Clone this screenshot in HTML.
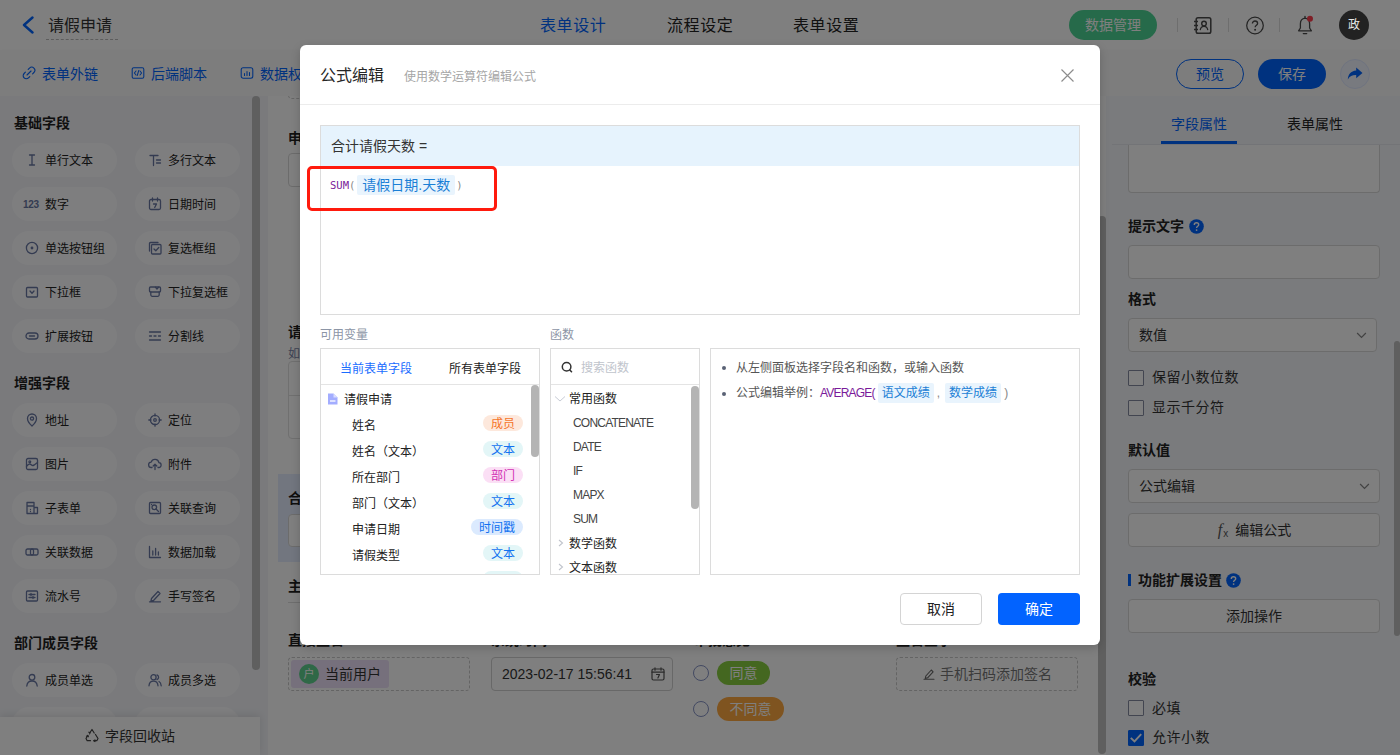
<!DOCTYPE html>
<html lang="zh-CN">
<head>
<meta charset="utf-8">
<title>公式编辑</title>
<style>
*{box-sizing:border-box;margin:0;padding:0}
html,body{width:1400px;height:755px;overflow:hidden;background:#fff}
body{font-family:"Liberation Sans","Noto Sans CJK SC",sans-serif;font-size:14px;color:#333;position:relative}
.abs{position:absolute}
svg{display:block}
/* ===== header ===== */
#hdr{position:absolute;left:0;top:0;width:1400px;height:51px;background:#fff;border-bottom:1px solid #f0f0f0}
#tb{position:absolute;left:0;top:50px;width:1400px;height:46px;background:#fafafa;box-shadow:0 2px 4px rgba(0,0,0,.08)}
.t{position:absolute;white-space:nowrap;line-height:20px}
.blue{color:#0064ff}
/* ===== left ===== */
#left{position:absolute;left:0;top:96px;width:268px;height:659px;background:#f4f5f9}
.sec{position:absolute;left:14px;font-size:14px;font-weight:bold;color:#1f1f1f;line-height:20px;white-space:nowrap}
.pill{position:absolute;width:105px;height:34px;border-radius:17px;background:#fdfdff;font-size:12px;color:#222;line-height:36px;padding-left:33px;white-space:nowrap}
.pill svg{position:absolute;left:13px;top:9.500px;width:14px;height:14px}
.c1{left:12px}.c2{left:135px}
/* ===== center ===== */
#center{position:absolute;left:268px;top:96px;width:838px;height:659px;overflow:hidden;background:#f0f1f5}
#canvas{position:absolute;left:0;top:0;width:838px;height:659px;background:#fff}
/* ===== right ===== */
#right{position:absolute;left:1106px;top:96px;width:294px;height:659px;background:#f4f6fa}
.lab{position:absolute;left:22px;font-size:14px;font-weight:bold;color:#222;line-height:20px;white-space:nowrap}
.inp{position:absolute;left:22px;width:252px;height:34px;border:1px solid #d9d9d9;border-radius:4px;background:#fff;font-size:14px;line-height:32px;padding-left:10px;color:#333}
.btn{position:absolute;left:22px;width:252px;height:34px;border:1px solid #d9d9d9;border-radius:4px;background:#fff;font-size:14px;line-height:32px;text-align:center;color:#333}
.cb{position:absolute;left:22px;width:16px;height:16px;border:1px solid #858aa0;border-radius:1px;background:#fff}
.cbt{position:absolute;left:46px;letter-spacing:.5px;font-size:14px;line-height:20px;color:#333;white-space:nowrap}
/* ===== overlay/modal ===== */
#mask{position:absolute;left:0;top:0;width:1400px;height:755px;background:rgba(0,0,0,.5)}
#modal{position:absolute;left:300px;top:45px;width:800px;height:600px;background:#fff;border-radius:6px;box-shadow:0 3px 10px rgba(0,0,0,.18)}

#modal .f12{font-size:12px}
.mbox{position:absolute;border:1px solid #dcdcdc;background:#fff;overflow:hidden}
.row{position:absolute;left:0;font-size:12px;line-height:20px;color:#222;white-space:nowrap}
.tag{position:absolute;height:16px;border-radius:8px;font-size:12px;line-height:19px;text-align:center;width:40px;left:162px}
.t-cy{background:#e3f6f7;color:#1272f0}
.t-or{background:#fde8dc;color:#f5752a}
.t-pk{background:#fbdff5;color:#d232b4}
.t-bl{background:#dbeafe;color:#1272f0}
.vt{display:inline-block;height:20px;line-height:20px;padding:0 6px;border-radius:2px;background:#e9f4fd;color:#1b7fd6;vertical-align:middle}
.mono{font-family:"DejaVu Sans Mono","Liberation Mono",monospace}
</style>
</head>
<body>
<div id="hdr">
<svg class="abs" style="left:21px;top:16px" width="14" height="18" viewBox="0 0 14 18"><path d="M11.5 1.5 L3 9 L11.5 16.5" fill="none" stroke="#0064ff" stroke-width="2.4" stroke-linecap="round" stroke-linejoin="round"/></svg>
<div class="t" style="left:48px;top:15px;font-size:16px;line-height:22px;color:#333">请假申请</div>
<div class="abs" style="left:46px;top:39px;width:72px;height:0;border-top:1px dashed #bbb"></div>
<div class="t blue" style="left:540px;top:15px;font-size:16px;letter-spacing:.600px;line-height:22px">表单设计</div>
<div class="t" style="left:667px;top:15px;font-size:16px;letter-spacing:.600px;line-height:22px;color:#222">流程设定</div>
<div class="t" style="left:793px;top:15px;font-size:16px;letter-spacing:.600px;line-height:22px;color:#222">表单设置</div>
<div class="abs" style="left:1069px;top:10px;width:88px;height:30px;border-radius:15px;background:rgb(76,212,148);color:#fff;font-size:14px;line-height:30px;text-align:center">数据管理</div>
<div class="abs" style="left:1177px;top:18px;width:1px;height:14px;background:#dcdcdc"></div>
<div class="abs" style="left:1228px;top:18px;width:1px;height:14px;background:#dcdcdc"></div>
<div class="abs" style="left:1279px;top:18px;width:1px;height:14px;background:#dcdcdc"></div>
<svg class="abs" style="left:1193px;top:16px" width="20" height="19" viewBox="0 0 20 19"><rect x="3.2" y="1.8" width="14.6" height="15.4" rx="1.8" fill="none" stroke="#4a4a4a" stroke-width="1.5"/><path d="M1 5.5h4M1 9.5h4M1 13.5h4" stroke="#4a4a4a" stroke-width="1.4" fill="none"/><circle cx="11" cy="7.6" r="2.3" fill="none" stroke="#4a4a4a" stroke-width="1.4"/><path d="M7.2 14.2c.4-2.6 2-3.8 3.8-3.8s3.4 1.200 3.800 3.800" fill="none" stroke="#4a4a4a" stroke-width="1.250"/></svg>
<svg class="abs" style="left:1245px;top:16px" width="20" height="20" viewBox="0 0 20 20"><circle cx="10" cy="9.5" r="8.300" fill="none" stroke="#4a4a4a" stroke-width="1.250"/><path d="M7.400 7.600c0-1.600 1.200-2.600 2.600-2.600s2.600 1 2.600 2.400c0 1.700-2.500 1.900-2.500 3.900" fill="none" stroke="#4a4a4a" stroke-width="1.300"/><circle cx="10.100" cy="13.800" r="1" fill="#4a4a4a"/></svg>
<svg class="abs" style="left:1296px;top:15px" width="20" height="21" viewBox="0 0 20 21"><path d="M9 3.200c-3 .4-4.600 2.700-4.600 5.500v4.300l-1.800 2.800h12.800l-1.800-2.800v-4.300c0-2.800-1.600-5.100-4.600-5.500z" fill="none" stroke="#4a4a4a" stroke-width="1.300" stroke-linejoin="round"/><path d="M7.300 18.600h3.400" stroke="#4a4a4a" stroke-width="1.300" stroke-linecap="round"/><path d="M9 1.500v1.600" stroke="#4a4a4a" stroke-width="1.300" stroke-linecap="round"/><circle cx="14" cy="3.700" r="3" fill="#ff3d4d"/></svg>
</div>
<div id="tb">
<svg class="abs" style="left:22px;top:16px" width="14" height="14" viewBox="0 0 14 14"><g fill="none" stroke="#0064ff" stroke-width="1.100" stroke-linecap="round"><path d="M6.200 3.400l1.300-1.300a3.100 3.100 0 0 1 4.400 4.400l-1.300 1.300"/><path d="M7.800 10.600l-1.300 1.300a3.100 3.100 0 0 1-4.400-4.400l1.300-1.300"/><path d="M5 9l4-4"/></g></svg>
<div class="t blue" style="left:42px;top:14px">表单外链</div>
<svg class="abs" style="left:131px;top:16px" width="14" height="14" viewBox="0 0 14 14"><g fill="none" stroke="#0064ff" stroke-width="1.050"><rect x="1.200" y="1.700" width="11.600" height="10.600" rx="1.500"/><path d="M5 5L3.400 7 5 9M9 5l1.600 2L9 9M7.700 4.600L6.300 9.400" stroke-linecap="round" stroke-linejoin="round"/></g></svg>
<div class="t blue" style="left:151px;top:14px">后端脚本</div>
<svg class="abs" style="left:240px;top:16px" width="14" height="14" viewBox="0 0 14 14"><g fill="none" stroke="#0064ff" stroke-width="1.050"><rect x="1.200" y="1.700" width="11.600" height="10.600" rx="2"/><path d="M4.500 9.500v-2M7 9.500v-4M9.500 9.500v-3" stroke-linecap="round"/></g></svg>
<div class="t blue" style="left:260px;top:14px">数据权限</div>
<div class="abs" style="left:1176px;top:9px;width:68px;height:30px;border:1px solid #0064ff;border-radius:15px;color:#0064ff;font-size:14px;line-height:28px;text-align:center">预览</div>
<div class="abs" style="left:1258px;top:9px;width:68px;height:30px;border-radius:15px;background:#0064ff;color:#fff;font-size:14px;line-height:30px;text-align:center">保存</div>
<div class="abs" style="left:1340px;top:9px;width:30px;height:30px;border-radius:15px;background:#f0f4ff;border:1px solid #dfe8ff"></div>
<svg class="abs" style="left:1346px;top:15px" width="18" height="18" viewBox="0 0 18 18"><path d="M10.200 2.500l6.300 5.400-6.300 5.400v-3.200c-3.800-.1-6.400 1-8.400 4.400.3-4.800 3-8.400 8.400-8.900z" fill="#0064ff"/></svg>
</div>
<div id="left">
<div class="sec" style="top:17px">基础字段</div>
<div class="pill c1" style="top:47px"><svg width="14" height="14" viewBox="0 0 14 14" fill="none" stroke="#6877a3" stroke-width="1.3" stroke-linecap="round" stroke-linejoin="round"><path d="M4.500 2h5M4.500 12h5M7 2v10"/></svg>单行文本</div>
<div class="pill c2" style="top:47px"><svg width="14" height="14" viewBox="0 0 14 14" fill="none" stroke="#6877a3" stroke-width="1.3" stroke-linecap="round" stroke-linejoin="round"><path d="M2 2.500h8M5.500 2.500v10M8.500 7h4M8.500 10h4"/></svg>多行文本</div>
<div class="pill c1" style="top:91px"><svg style="width:18px;height:14px;left:11px;top:10px" width="18" height="14" viewBox="0 0 18 14"><text x="0" y="11" font-family="Liberation Sans,sans-serif" font-size="10" font-weight="bold" letter-spacing="-.300" fill="#6877a3">123</text></svg>数字</div>
<div class="pill c2" style="top:91px"><svg width="14" height="14" viewBox="0 0 14 14" fill="none" stroke="#6877a3" stroke-width="1.3" stroke-linecap="round" stroke-linejoin="round"><rect x="1.500" y="2.500" width="11" height="10" rx="1.500"/><path d="M4.500 1v3M9.500 1v3M5.500 7h3l-1.800 3.500"/></svg>日期时间</div>
<div class="pill c1" style="top:135px"><svg width="14" height="14" viewBox="0 0 14 14" fill="none" stroke="#6877a3" stroke-width="1.3" stroke-linecap="round" stroke-linejoin="round"><circle cx="7" cy="7" r="5.600"/><circle cx="7" cy="7" r="1.400" fill="#6877a3" stroke="none"/></svg>单选按钮组</div>
<div class="pill c2" style="top:135px"><svg width="14" height="14" viewBox="0 0 14 14" fill="none" stroke="#6877a3" stroke-width="1.3" stroke-linecap="round" stroke-linejoin="round"><rect x="3.500" y="3.500" width="9.500" height="9.500" rx="1"/><path d="M1.500 10V2.500a1 1 0 0 1 1-1H10M6 8l1.800 1.800 3-3.300"/></svg>复选框组</div>
<div class="pill c1" style="top:179px"><svg width="14" height="14" viewBox="0 0 14 14" fill="none" stroke="#6877a3" stroke-width="1.3" stroke-linecap="round" stroke-linejoin="round"><rect x="1.500" y="2.500" width="11" height="9.500" rx="1"/><path d="M5 6l2 2.200L9 6"/></svg>下拉框</div>
<div class="pill c2" style="top:179px"><svg width="14" height="14" viewBox="0 0 14 14" fill="none" stroke="#6877a3" stroke-width="1.3" stroke-linecap="round" stroke-linejoin="round"><rect x="1.500" y="2" width="11" height="5" rx="1"/><path d="M7.500 2.300l1.500 1.700 1.500-1.700M2.800 7v2.800a1.500 1.500 0 0 0 1.500 1.500h5.400a1.500 1.500 0 0 0 1.500-1.500V7"/></svg>下拉复选框</div>
<div class="pill c1" style="top:223px"><svg width="14" height="14" viewBox="0 0 14 14" fill="none" stroke="#6877a3" stroke-width="1.3" stroke-linecap="round" stroke-linejoin="round"><rect x="1" y="4" width="12" height="6" rx="3"/><path d="M4.500 7h5"/></svg>扩展按钮</div>
<div class="pill c2" style="top:223px"><svg width="14" height="14" viewBox="0 0 14 14" fill="none" stroke="#6877a3" stroke-width="1.3" stroke-linecap="round" stroke-linejoin="round"><path d="M1.500 3h11M1.500 11h11M1.500 7h2M6 7h2M10.500 7h2"/></svg>分割线</div>
<div class="sec" style="top:277px">增强字段</div>
<div class="pill c1" style="top:307px"><svg width="14" height="14" viewBox="0 0 14 14" fill="none" stroke="#6877a3" stroke-width="1.3" stroke-linecap="round" stroke-linejoin="round"><path d="M7 13s-4.500-4-4.500-7.500a4.500 4.500 0 0 1 9 0C11.500 9 7 13 7 13z"/><circle cx="7" cy="5.600" r="1.600"/></svg>地址</div>
<div class="pill c2" style="top:307px"><svg width="14" height="14" viewBox="0 0 14 14" fill="none" stroke="#6877a3" stroke-width="1.3" stroke-linecap="round" stroke-linejoin="round"><circle cx="7" cy="7" r="4.600"/><circle cx="7" cy="7" r="1.300"/><path d="M7 .800v2.200M7 11v2.200M.800 7H3M11 7h2.200"/></svg>定位</div>
<div class="pill c1" style="top:351px"><svg width="14" height="14" viewBox="0 0 14 14" fill="none" stroke="#6877a3" stroke-width="1.3" stroke-linecap="round" stroke-linejoin="round"><rect x="1.500" y="1.500" width="11" height="11" rx="1.500"/><path d="M1.500 9.500c2-3 3.500-3 5-1.500s3 0 6-2.500"/><circle cx="4.800" cy="4.800" r=".900"/></svg>图片</div>
<div class="pill c2" style="top:351px"><svg width="14" height="14" viewBox="0 0 14 14" fill="none" stroke="#6877a3" stroke-width="1.3" stroke-linecap="round" stroke-linejoin="round"><path d="M4 10.500H3.500a2.700 2.700 0 0 1-.3-5.400 4 4 0 0 1 7.700.6 2.400 2.400 0 0 1-.4 4.800H10M7 12.500V7.500M5.200 9L7 7.200 8.800 9"/></svg>附件</div>
<div class="pill c1" style="top:395px"><svg width="14" height="14" viewBox="0 0 14 14" fill="none" stroke="#6877a3" stroke-width="1.3" stroke-linecap="round" stroke-linejoin="round"><path d="M2 1.500h7v11H2zM9 6.500h3.500v6H9M2 5h7M5.500 8.500h0M5.500 10.500h0"/></svg>子表单</div>
<div class="pill c2" style="top:395px"><svg width="14" height="14" viewBox="0 0 14 14" fill="none" stroke="#6877a3" stroke-width="1.3" stroke-linecap="round" stroke-linejoin="round"><rect x="1.500" y="1.500" width="11" height="11" rx="1"/><circle cx="6.300" cy="6.300" r="2.300"/><path d="M8 8l2.500 2.500M3.500 3.500h0"/></svg>关联查询</div>
<div class="pill c1" style="top:439px"><svg width="14" height="14" viewBox="0 0 14 14" fill="none" stroke="#6877a3" stroke-width="1.3" stroke-linecap="round" stroke-linejoin="round"><rect x="1" y="4" width="7.500" height="6" rx="1.500"/><rect x="5.500" y="4" width="7.500" height="6" rx="1.500"/></svg>关联数据</div>
<div class="pill c2" style="top:439px"><svg width="14" height="14" viewBox="0 0 14 14" fill="none" stroke="#6877a3" stroke-width="1.3" stroke-linecap="round" stroke-linejoin="round"><path d="M1.500 1.500v11h11M4.800 10V6M7.600 10V3.500M10.400 10V7"/></svg>数据加载</div>
<div class="pill c1" style="top:483px"><svg width="14" height="14" viewBox="0 0 14 14" fill="none" stroke="#6877a3" stroke-width="1.3" stroke-linecap="round" stroke-linejoin="round"><rect x="1.500" y="2" width="11" height="10" rx="1"/><path d="M4 5.500h6M4 8.500h6M6 4.500v2M8 7.500v2"/></svg>流水号</div>
<div class="pill c2" style="top:483px"><svg width="14" height="14" viewBox="0 0 14 14" fill="none" stroke="#6877a3" stroke-width="1.3" stroke-linecap="round" stroke-linejoin="round"><path d="M3.500 9.500l6.500-7 2 2-6.500 7-2.600.600zM1.500 12.800h11"/></svg>手写签名</div>
<div class="sec" style="top:537px">部门成员字段</div>
<div class="pill c1" style="top:567px"><svg width="14" height="14" viewBox="0 0 14 14" fill="none" stroke="#6877a3" stroke-width="1.3" stroke-linecap="round" stroke-linejoin="round"><circle cx="7" cy="4.300" r="2.800"/><path d="M1.800 13c.3-3.400 2.400-5 5.200-5s4.900 1.600 5.200 5"/></svg>成员单选</div>
<div class="pill c2" style="top:567px"><svg width="14" height="14" viewBox="0 0 14 14" fill="none" stroke="#6877a3" stroke-width="1.3" stroke-linecap="round" stroke-linejoin="round"><circle cx="5.500" cy="4.300" r="2.600"/><path d="M1 12.800c.2-3.200 2-4.700 4.500-4.700s4.300 1.500 4.500 4.700M9 1.900a2.600 2.600 0 0 1 0 4.800M11 8.500c1.300.7 2 2.200 2.200 4.300"/></svg>成员多选</div>
<div class="pill c1" style="top:611px"></div><div class="pill c2" style="top:611px"></div>
<div class="abs" style="left:252px;top:0;width:8px;height:574px;border-radius:4px;background:#bebebe"></div>
<div class="abs" style="left:0;top:621px;width:260px;height:38px;background:#fff;box-shadow:0 -2px 8px rgba(0,0,0,.10);font-size:14px;line-height:38px;color:#333;padding-left:105px">字段回收站</div>
<svg class="abs" style="left:84px;top:632px" width="16" height="16" viewBox="0 0 16 16" fill="none" stroke="#444" stroke-width="1.200" stroke-linecap="round" stroke-linejoin="round"><path d="M6 4.500L8 1.500l2.200 3.500M11.500 6.500l2.500 4-1.200 2.200H10M6.500 12.700H3.200L2 10.500l1.800-3"/><path d="M4.800 4.200L6 4.600l-.4 1.300M11 12l-1.200.7 1.200.8M2.500 8.200l1.300-.7.600 1.200"/></svg>
</div>
<div id="center"><div id="canvas">
<div class="abs" style="left:20px;top:-36px;width:790px;height:39px;border:1px dashed #ccc;border-radius:4px"></div>
<div class="t" style="left:20px;top:32px;font-size:14px;font-weight:bold;color:#1f1f1f">申请人</div>
<div class="abs" style="left:20px;top:57px;width:384px;height:34px;border:1px solid #d9d9d9;border-radius:4px"></div>
<div class="t" style="left:20px;top:226px;font-size:14px;font-weight:bold;color:#1f1f1f">请假日期</div>
<div class="t" style="left:20px;top:248px;font-size:12px;color:#7a86a8">如有多个时间段请添加多行</div>
<div class="abs" style="left:20px;top:265px;width:790px;height:78px;border:1px solid #e0e0e0;border-radius:4px"></div>
<div class="abs" style="left:20px;top:299px;width:790px;height:1px;background:#e0e0e0"></div>
<div class="abs" style="left:10px;top:378px;width:410px;height:88px;background:#e4ecff"></div>
<div class="t" style="left:20px;top:392px;font-size:14px;font-weight:bold;color:#1f1f1f">合计请假天数</div>
<div class="abs" style="left:20px;top:418px;width:384px;height:33px;border:1px solid #d9d9d9;border-radius:4px;background:#fff"></div>
<div class="t" style="left:20px;top:480px;font-size:14px;font-weight:bold;color:#1f1f1f">主管审批</div>
<div class="abs" style="left:20px;top:506px;width:790px;height:1px;background:#dcdcdc"></div>
<div class="t" style="left:20px;top:534px;font-size:14px;font-weight:bold;color:#1f1f1f">直接主管</div>
<div class="t" style="left:223px;top:534px;font-size:14px;font-weight:bold;color:#1f1f1f">系统时间</div>
<div class="t" style="left:426px;top:534px;font-size:14px;font-weight:bold;color:#1f1f1f">审批意见</div>
<div class="t" style="left:628px;top:534px;font-size:14px;font-weight:bold;color:#1f1f1f">主管签字</div>
<div class="abs" style="left:20px;top:561px;width:182px;height:34px;border:1px dashed #c8c8c8;border-radius:4px"></div>
<div class="abs" style="left:23px;top:564px;width:98px;height:28px;border-radius:3px;background:#ede0f8"></div>
<div class="abs" style="left:31px;top:568px;width:20px;height:20px;border-radius:10px;background:#5fd08e;color:#fff;font-size:11px;line-height:20px;text-align:center">户</div>
<div class="t" style="left:57px;top:568px;font-size:14px;color:#333">当前用户</div>
<div class="abs" style="left:223px;top:561px;width:182px;height:34px;border:1px solid #d0d0d0;border-radius:4px;font-size:14px;line-height:32px;padding-left:10px;color:#333">2023-02-17 15:56:41</div>
<svg class="abs" style="left:383px;top:571px" width="14" height="14" viewBox="0 0 14 14" fill="none" stroke="#555" stroke-width="1.200" stroke-linecap="round" stroke-linejoin="round"><rect x="1" y="2" width="12" height="11" rx="1.500"/><path d="M4 .800v2.400M10 .800v2.400M1 5.200h12M5.500 7.500h3l-1.600 3.500"/></svg>
<div class="abs" style="left:425px;top:569px;width:16px;height:16px;border-radius:8px;border:1px solid #8592c4;background:#fff"></div>
<div class="abs" style="left:449px;top:565px;width:53px;height:24px;border-radius:12px;background:rgb(136,206,64);color:#fff;font-size:14px;line-height:24px;text-align:center">同意</div>
<div class="abs" style="left:425px;top:605px;width:16px;height:16px;border-radius:8px;border:1px solid #8592c4;background:#fff"></div>
<div class="abs" style="left:449px;top:601px;width:67px;height:24px;border-radius:12px;background:#ffa940;color:#fff;font-size:14px;line-height:24px;text-align:center">不同意</div>
<div class="abs" style="left:628px;top:561px;width:182px;height:34px;border:1px dashed #c8c8c8;border-radius:4px"></div>
<svg class="abs" style="left:655px;top:572px" width="12" height="12" viewBox="0 0 12 12" fill="none" stroke="#666" stroke-width="1.100" stroke-linecap="round" stroke-linejoin="round"><path d="M2.800 8l5.500-6 1.800 1.800-5.500 6-2.300.500zM1 11.300h10"/></svg>
<div class="t" style="left:672px;top:568px;font-size:14px;color:#777">手机扫码添加签名</div>
</div>
<div class="abs" style="left:830px;top:120px;width:8px;height:538px;border-radius:4px;background:#bebebe"></div>
</div>
<div id="right">
<div class="t" style="left:65px;top:18px;font-size:14px;color:#0064ff">字段属性</div>
<div class="t" style="left:181px;top:18px;font-size:14px;color:#222">表单属性</div>
<div class="abs" style="left:55px;top:45px;width:76px;height:3px;background:#0064ff"></div>
<div class="abs" style="left:6px;top:48px;width:288px;height:1px;background:#e6e8ee"></div>
<div class="abs" style="left:22px;top:49px;width:252px;height:48px;border:1px solid #d9d9d9;border-top:none;border-radius:0 0 4px 4px;background:#fff"></div>
<div class="lab" style="top:120px">提示文字</div><svg class="abs" style="left:83px;top:123px" width="15" height="15" viewBox="0 0 15 15"><circle cx="7.500" cy="7.500" r="7.300" fill="#0064ff"/><path d="M5.300 5.900c0-1.300 1-2.100 2.200-2.100s2.200.800 2.200 2c0 1.400-2.100 1.500-2.100 3.100" fill="none" stroke="#fff" stroke-width="1.400"/><circle cx="7.600" cy="11.100" r=".900" fill="#fff"/></svg>
<div class="inp" style="top:149px"></div>
<div class="lab" style="top:193px">格式</div>
<div class="inp" style="top:222px;width:249px">数值</div><svg class="abs" style="left:250px;top:236px" width="11" height="7" viewBox="0 0 12 8"><path d="M1 1.200l5 5 5-5" fill="none" stroke="#858585" stroke-width="1.400"/></svg>
<div class="cb" style="top:274px"></div><div class="cbt" style="top:271px">保留小数位数</div>
<div class="cb" style="top:304px"></div><div class="cbt" style="top:301px">显示千分符</div>
<div class="lab" style="top:344px">默认值</div>
<div class="inp" style="top:373px">公式编辑</div><svg class="abs" style="left:253px;top:387px" width="11" height="7" viewBox="0 0 12 8"><path d="M1 1.200l5 5 5-5" fill="none" stroke="#858585" stroke-width="1.400"/></svg>
<div class="btn" style="top:417px;padding-left:1px"><span style="font-family:'Liberation Serif',serif;font-style:italic;font-size:16px;line-height:0;color:#555">f</span><span style="font-size:10px;line-height:0;vertical-align:-2px;color:#555;margin-right:3px;margin-left:1px">x</span> 编辑公式</div>
<div class="abs" style="left:22px;top:478px;width:3px;height:12px;background:#0064ff"></div>
<div class="lab" style="left:32px;top:474px">功能扩展设置</div><svg class="abs" style="left:120px;top:477px" width="15" height="15" viewBox="0 0 15 15"><circle cx="7.500" cy="7.500" r="7.300" fill="#0064ff"/><path d="M5.300 5.900c0-1.300 1-2.100 2.200-2.100s2.200.800 2.200 2c0 1.400-2.100 1.500-2.100 3.100" fill="none" stroke="#fff" stroke-width="1.400"/><circle cx="7.600" cy="11.100" r=".900" fill="#fff"/></svg>
<div class="btn" style="top:503px">添加操作</div>
<div class="lab" style="top:573px">校验</div>
<div class="cb" style="top:604px"></div><div class="cbt" style="top:602px">必填</div>
<div class="cb" style="top:634px;background:#0064ff;border-color:#0064ff"><svg width="14" height="14" viewBox="0 0 14 14"><path d="M1.800 6.800l3.700 3.700 6.700-7.300" fill="none" stroke="#fff" stroke-width="1.900"/></svg></div><div class="cbt" style="top:631px">允许小数</div>
<div class="abs" style="left:288px;top:245px;width:6px;height:295px;border-radius:3px;background:#bebebe"></div>
</div>
<div id="mask"></div>
<div class="abs" style="left:1339px;top:10px;width:30px;height:30px;border-radius:15px;background:#222;color:#e6e6e6;font-size:12px;line-height:30px;text-align:center">政</div>
<div id="modal">
<div class="t" style="left:20px;top:19px;font-size:16px;line-height:24px;color:#262626">公式编辑</div>
<div class="t" style="left:104px;top:22px;font-size:12px;line-height:20px;color:#a6a6a6">使用数学运算符编辑公式</div>
<svg class="abs" style="left:760px;top:23px" width="15" height="15" viewBox="0 0 15 15"><path d="M1.500 1.500l12 12M13.500 1.500l-12 12" stroke="#8c8c8c" stroke-width="1.150" fill="none"/></svg>
<div class="abs" style="left:0;top:59px;width:800px;height:1px;background:#ececec"></div>
<div class="mbox" style="left:20px;top:80px;width:760px;height:190px;overflow:visible">
<div class="abs" style="left:0;top:0;width:758px;height:40px;background:#e6f3fd;font-size:14px;line-height:40px;padding-left:10px;color:#333">合计请假天数 =</div>
<div class="abs" style="left:9px;top:48px;font-size:14px;line-height:20px;white-space:nowrap"><span class="mono" style="font-size:10.500px;color:#7a1a9a">SUM</span><span class="mono" style="font-size:10.500px;color:#8a8a8a">(</span><span class="vt" style="margin:0 1px 0 2px;padding:0 5px">请假日期.天数</span><span class="mono" style="font-size:10.500px;color:#8a8a8a">)</span></div>
</div>
<div class="abs" style="left:7px;top:121px;width:190px;height:45px;border:3px solid #ff1a0d;border-radius:5px"></div>
<div class="t f12" style="left:20px;top:280px;color:#8c95a6">可用变量</div>
<div class="t f12" style="left:250px;top:280px;color:#8c95a6">函数</div>
<div class="mbox" style="left:20px;top:303px;width:220px;height:227px">
<div class="t f12" style="left:19px;top:10px;color:#1a6dff">当前表单字段</div>
<div class="t f12" style="left:128px;top:10px;color:#222">所有表单字段</div>
<div class="abs" style="left:0;top:35px;width:220px;height:1px;background:#e4e4e4"></div>
<svg class="abs" style="left:6px;top:44px" width="11" height="12" viewBox="0 0 11 12"><path d="M1 .500h5.500L10.500 4.500V11.500H1z" fill="#a3adff"/><path d="M6.500 .500v4h4" fill="#d9ddff"/><path d="M3 8h5.500" stroke="#fff" stroke-width="1.300"/></svg>
<div class="row" style="left:23px;top:41px">请假申请</div>
<div class="row" style="left:31px;top:67px">姓名</div><div class="tag t-or" style="top:66px;width:40px;left:162px">成员</div>
<div class="row" style="left:31px;top:93px">姓名（文本）</div><div class="tag t-cy" style="top:92px;width:40px;left:162px">文本</div>
<div class="row" style="left:31px;top:119px">所在部门</div><div class="tag t-pk" style="top:118px;width:40px;left:162px">部门</div>
<div class="row" style="left:31px;top:145px">部门（文本）</div><div class="tag t-cy" style="top:144px;width:40px;left:162px">文本</div>
<div class="row" style="left:31px;top:171px">申请日期</div><div class="tag t-bl" style="top:170px;width:52px;left:150px">时间戳</div>
<div class="row" style="left:31px;top:197px">请假类型</div><div class="tag t-cy" style="top:196px;width:40px;left:162px">文本</div>
<div class="tag t-cy" style="top:222px;width:40px;left:162px"></div>
<div class="abs" style="left:210px;top:36px;width:8px;height:72px;border-radius:4px;background:#b4b4b4"></div>
</div>
<div class="mbox" style="left:250px;top:303px;width:150px;height:227px">
<svg class="abs" style="left:10px;top:12px" width="12" height="12" viewBox="0 0 12 12"><circle cx="5.600" cy="5.800" r="4.300" fill="none" stroke="#333" stroke-width="1.500"/><path d="M8.800 9l1.700 1.700" stroke="#333" stroke-width="1.600" stroke-linecap="round"/></svg>
<div class="t f12" style="left:30px;top:9px;color:#c0c4cc">搜索函数</div>
<div class="abs" style="left:0;top:35px;width:150px;height:1px;background:#e4e4e4"></div>
<svg class="abs" style="left:3px;top:46px" width="12" height="8" viewBox="0 0 12 8"><path d="M1 1.500l5 4.500 5-4.500" fill="none" stroke="#c8ccd6" stroke-width="1"/></svg>
<div class="row" style="left:18px;top:40px">常用函数</div>
<div class="row" style="left:22px;top:64px;color:#444;letter-spacing:-.800px">CONCATENATE</div>
<div class="row" style="left:22px;top:88px;color:#444;letter-spacing:-.800px">DATE</div>
<div class="row" style="left:22px;top:112px;color:#444;letter-spacing:-.800px">IF</div>
<div class="row" style="left:22px;top:136px;color:#444;letter-spacing:-.800px">MAPX</div>
<div class="row" style="left:22px;top:160px;color:#444;letter-spacing:-.800px">SUM</div>
<svg class="abs" style="left:7px;top:190px" width="6" height="8" viewBox="0 0 6 8"><path d="M1 1l3.500 3L1 7" fill="none" stroke="#c0c4cc" stroke-width="1.100"/></svg>
<div class="row" style="left:18px;top:185px">数学函数</div>
<svg class="abs" style="left:7px;top:214px" width="6" height="8" viewBox="0 0 6 8"><path d="M1 1l3.500 3L1 7" fill="none" stroke="#c0c4cc" stroke-width="1.100"/></svg>
<div class="row" style="left:18px;top:209px">文本函数</div>
<div class="abs" style="left:140px;top:37px;width:8px;height:123px;border-radius:4px;background:#b4b4b4"></div>
</div>
<div class="mbox" style="left:410px;top:303px;width:370px;height:227px">
<div class="abs" style="left:11px;top:17px;width:4px;height:4px;border-radius:2px;background:#5a6275"></div>
<div class="row" style="left:25px;top:9px;color:#555">从左侧面板选择字段名和函数，或输入函数</div>
<div class="abs" style="left:11px;top:43px;width:4px;height:4px;border-radius:2px;background:#5a6275"></div>
<div class="row" style="left:25px;top:34px;line-height:20px;color:#555">公式编辑举例：<span style="color:#7a1a9a;letter-spacing:-.800px">AVERAGE(</span><span class="vt" style="margin:0 3px;padding:0 4px;position:relative;top:-1px">语文成绩</span><span style="color:#888">,</span><span class="vt" style="margin:0 3px 0 5px;padding:0 4px;position:relative;top:-1px">数学成绩</span><span style="color:#888">)</span></div>
</div>
<div class="abs" style="left:600px;top:548px;width:82px;height:32px;border:1px solid #d4d4d4;border-radius:4px;font-size:14px;line-height:30px;text-align:center;color:#222">取消</div>
<div class="abs" style="left:698px;top:548px;width:82px;height:32px;border-radius:4px;background:#0263ff;font-size:14px;line-height:32px;text-align:center;color:#fff">确定</div>
</div>
</body>
</html>
